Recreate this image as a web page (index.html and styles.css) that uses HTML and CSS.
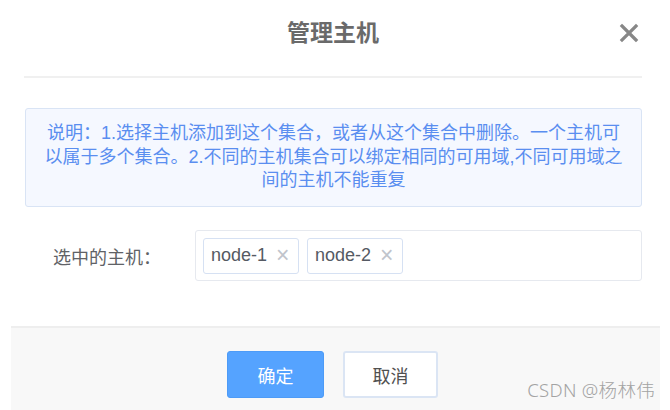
FILE: index.html
```html
<!DOCTYPE html>
<html lang="zh-CN">
<head>
<meta charset="utf-8">
<title>管理主机</title>
<link rel="stylesheet" href="styles.css">
</head>
<body>
<div class="dialog">
  <div class="header">
    <span class="title">管理主机</span>
    <span class="close" aria-label="关闭">
      <svg width="20" height="20" viewBox="0 0 20 20"><path d="M3 3 L17 17 M17 3 L3 17" stroke="#878787" stroke-width="3.2" stroke-linecap="square" fill="none"/></svg>
    </span>
  </div>
  <div class="body">
    <div class="notice">
      <span class="line">说明：1.选择主机添加到这个集合，或者从这个集合中删除。一个主机可</span>
      <span class="line">以属于多个集合。2.不同的主机集合可以绑定相同的可用域,不同可用域之</span>
      <span class="line">间的主机不能重复</span>
    </div>
    <div class="form-row">
      <label class="label">选中的主机：</label>
      <div class="select">
        <span class="tag">node-1<span class="tag-x">×</span></span>
        <span class="tag">node-2<span class="tag-x">×</span></span>
      </div>
    </div>
  </div>
  <div class="footer">
    <button class="btn btn-primary">确定</button>
    <button class="btn btn-default">取消</button>
    <span class="watermark">CSDN @杨林伟</span>
  </div>
</div>
</body>
</html>
```
FILE: styles.css
```css
html, body {
  margin: 0;
  padding: 0;
  background: #ffffff;
}
body {
  font-family: "Liberation Sans", "Noto Sans CJK SC", sans-serif;
  width: 670px;
  height: 410px;
  overflow: hidden;
}
.dialog {
  margin-left: 11px;
  width: 649px;
  height: 410px;
  display: flex;
  flex-direction: column;
}
.header {
  position: relative;
  margin: 0 18px 0 13px;
  height: 76px;
  border-bottom: 2px solid #f0f0f0;
  text-align: center;
  box-sizing: content-box;
}
.title {
  display: inline-block;
  margin-top: 18px;
  font-size: 23px;
  line-height: 30px;
  font-weight: bold;
  color: #6a6a6a;
}
.close {
  position: absolute;
  top: 23px;
  right: 3px;
  width: 20px;
  height: 20px;
  display: block;
}
.close svg { display: block; }
.body {
  padding: 30px 18px 0 14px;
}
.notice {
  box-sizing: border-box;
  height: 99px;
  border: 1px solid #d9e4f5;
  border-radius: 3px;
  background: #f5f8ff;
  padding-top: 13px;
  text-align: center;
  color: #5a8ef0;
  font-size: 18px;
  line-height: 23.5px;
}
.notice .line {
  display: block;
  white-space: nowrap;
}
.form-row {
  display: flex;
  align-items: center;
  margin-top: 23px;
}
.label {
  width: 170px;
  box-sizing: border-box;
  padding-left: 28px;
  font-size: 18px;
  color: #606266;
  white-space: nowrap;
}
.select {
  flex: 1;
  box-sizing: border-box;
  height: 51px;
  border: 1px solid #e6e9ef;
  border-radius: 3px;
  padding: 6px 7px;
  display: flex;
  align-items: center;
  gap: 8px;
}
.tag {
  box-sizing: border-box;
  width: 96px;
  height: 36px;
  border: 1px solid #d6e1f3;
  border-radius: 3px;
  background: #fff;
  padding-left: 7px;
  display: flex;
  align-items: center;
  font-size: 18px;
  color: #555a63;
}
.tag-x {
  margin-left: 9px;
  color: #c0c4cc;
  font-size: 23px;
  line-height: 1;
}
.footer {
  position: relative;
  flex: 1;
  margin-top: 45px;
  border-top: 2px solid #eeeeee;
  background: #f8f8f8;
  padding: 23px 6px 0 0;
  display: flex;
  justify-content: center;
  align-items: flex-start;
  gap: 19px;
}
.btn {
  height: 47px;
  border-radius: 3px;
  font-family: "Liberation Sans", "Noto Sans CJK SC", sans-serif;
  font-size: 18px;
  cursor: pointer;
  padding: 0;
}
.btn-primary {
  width: 97px;
  background: #55a3ff;
  border: 1px solid #4d9bf7;
  color: #ffffff;
}
.btn-default {
  width: 95px;
  background: #ffffff;
  border: 2px solid #dbe5f4;
  color: #505050;
}
.watermark {
  position: absolute;
  right: 5px;
  top: 51px;
  font-size: 18.5px;
  line-height: 22px;
  color: #a3a3a3;
  font-family: "Noto Sans", "Noto Sans CJK SC", sans-serif;
  font-weight: 300;
  letter-spacing: 0.3px;
}
```
